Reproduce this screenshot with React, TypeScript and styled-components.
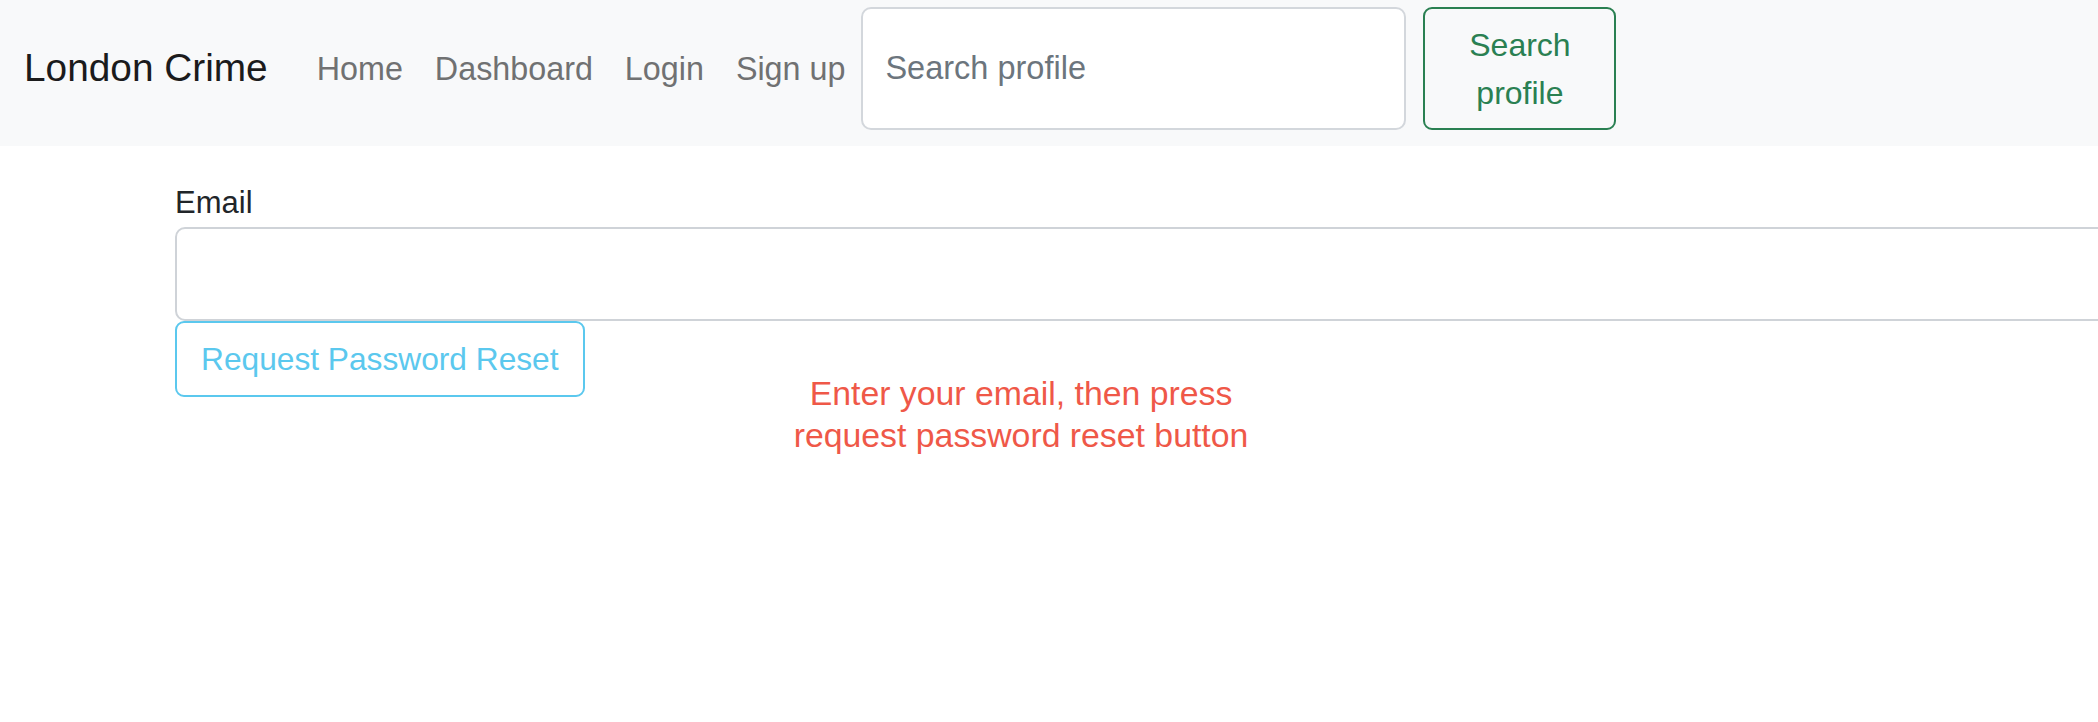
import React from "react";
import styled, { createGlobalStyle } from "styled-components";

const GlobalStyle = createGlobalStyle`
  html, body {
    margin: 0;
    padding: 0;
    background: #ffffff;
    overflow: hidden;
  }
  body {
    font-family: "Liberation Sans", Arial, Helvetica, sans-serif;
    color: #212529;
  }
  * { box-sizing: border-box; }
`;

const Page = styled.div`
  width: 2098px;
  min-height: 722px;
`;

const Navbar = styled.nav`
  display: flex;
  align-items: center;
  height: 146px;
  padding: 7px 24px 16px 24px;
  background: #f8f9fa;
`;

const Brand = styled.a`
  font-size: 38.8px;
  line-height: 1;
  color: #1b1b1c;
  text-decoration: none;
  margin-right: 33px;
  white-space: nowrap;
`;

const NavList = styled.ul`
  display: flex;
  list-style: none;
  margin: 0;
  padding: 0;
`;

const NavLink = styled.a`
  display: block;
  padding: 0 16px;
  font-size: 32.3px;
  line-height: 48px;
  color: #707172;
  text-decoration: none;
  white-space: nowrap;
`;

const SearchForm = styled.form`
  display: flex;
  align-items: stretch;
  gap: 17px;
  height: 123px;
`;

const SearchInput = styled.input`
  width: 545px;
  height: 100%;
  padding: 0 22px;
  font-family: inherit;
  font-size: 32.5px;
  color: #212529;
  background: #ffffff;
  border: 2px solid #d3d7dc;
  border-radius: 10px;
  outline: none;
  &::placeholder {
    color: #6c757d;
  }
`;

const OutlineButton = styled.button<{ $color: string }>`
  font-family: inherit;
  font-size: 32px;
  line-height: 48px;
  color: ${(p) => p.$color};
  background: transparent;
  border: 2px solid ${(p) => p.$color};
  border-radius: 9px;
  padding: 11px 24px;
  text-align: center;
  cursor: pointer;
`;

const SearchButton = styled(OutlineButton)`
  width: 193px;
  white-space: normal;
`;

const Main = styled.main`
  padding: 33px 0 0 175px;
`;

const Label = styled.label`
  display: block;
  font-size: 31px;
  line-height: 48px;
  color: #212529;
`;

const EmailInput = styled.input`
  display: block;
  width: 1960px;
  height: 94px;
  padding: 0 30px;
  font-family: inherit;
  font-size: 40px;
  border: 2px solid #cfd3d8;
  border-radius: 10px;
  outline: none;
  background: #ffffff;
`;

const ActionRow = styled.div`
  display: grid;
  grid-template-columns: 408px 876px;
  align-items: start;
`;

const ResetButton = styled(OutlineButton)`
  height: 76px;
  padding: 0 24px;
  font-size: 31.7px;
  white-space: nowrap;
  justify-self: start;
`;

const Message = styled.p`
  margin: 52px 0 0 0;
  text-align: center;
  font-size: 33.8px;
  line-height: 41.5px;
  color: #ef5848;
`;

export default function App() {
  return (
    <Page>
      <GlobalStyle />
      <Navbar>
        <Brand href="#">London Crime</Brand>
        <NavList>
          <li><NavLink href="#">Home</NavLink></li>
          <li><NavLink href="#">Dashboard</NavLink></li>
          <li><NavLink href="#">Login</NavLink></li>
          <li><NavLink href="#">Sign up</NavLink></li>
        </NavList>
        <SearchForm onSubmit={(e) => e.preventDefault()}>
          <SearchInput type="search" placeholder="Search profile" />
          <SearchButton type="submit" $color="#2a8052">Search profile</SearchButton>
        </SearchForm>
      </Navbar>
      <Main>
        <Label htmlFor="email">Email</Label>
        <EmailInput id="email" type="email" />
        <ActionRow>
          <ResetButton type="button" $color="#5bc8ee">Request Password Reset</ResetButton>
          <Message>
            Enter your email, then press
            <br />
            request password reset button
          </Message>
        </ActionRow>
      </Main>
    </Page>
  );
}
